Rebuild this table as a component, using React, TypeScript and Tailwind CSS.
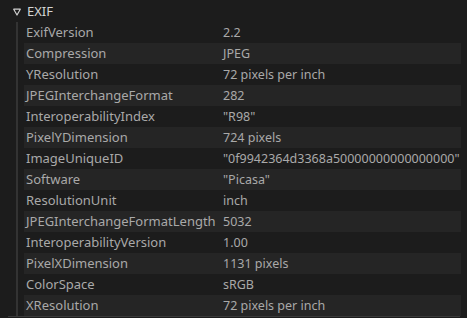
const rows: [string, string][] = [
  ["ExifVersion", "2.2"],
  ["Compression", "JPEG"],
  ["YResolution", "72 pixels per inch"],
  ["JPEGInterchangeFormat", "282"],
  ["InteroperabilityIndex", "\"R98\""],
  ["PixelYDimension", "724 pixels"],
  ["ImageUniqueID", "\"0f9942364d3368a50000000000000000\""],
  ["Software", "\"Picasa\""],
  ["ResolutionUnit", "inch"],
  ["JPEGInterchangeFormatLength", "5032"],
  ["InteroperabilityVersion", "1.00"],
  ["PixelXDimension", "1131 pixels"],
  ["ColorSpace", "sRGB"],
  ["XResolution", "72 pixels per inch"],
];

export default function App() {
  return (
    <div
      className="w-[467px] h-[318px] overflow-hidden bg-[#1c1c1c] leading-[21px]"
      style={{ fontFamily: '"Noto Sans", "Open Sans", sans-serif' }}
    >
      <div className="flex items-center h-[22px] pl-[13px] text-[13px] text-[#d4d4d4]">
        <svg width="8" height="8" viewBox="0 0 8 8" className="mr-[6px] mt-[1px]">
          <path d="M0.7 1.2 H7.3 L4 7 Z" fill="none" stroke="#cfcfcf" strokeWidth="1.2" strokeLinejoin="round" />
        </svg>
        <span>EXIF</span>
      </div>
      <div className="flex pl-[16px] pr-[6px]">
        <div className="w-[2px] bg-[#333333] mr-[6px]" />
        <div className="flex-1">
          {rows.map(([k, v], i) => (
            <div
              key={k}
              className={`flex h-[21px] items-center pl-[2px] text-[#a9a9a9] ${i % 2 === 1 ? "bg-[#252525]" : ""}`}
            >
              <div className="w-[197px] shrink-0 whitespace-nowrap text-[13px]">{k}</div>
              <div className="whitespace-nowrap text-[12.5px]">{v}</div>
            </div>
          ))}
        </div>
      </div>
      <div className="ml-[8px] mr-[7px] h-px bg-[#3a3a3a]" />
    </div>
  );
}
